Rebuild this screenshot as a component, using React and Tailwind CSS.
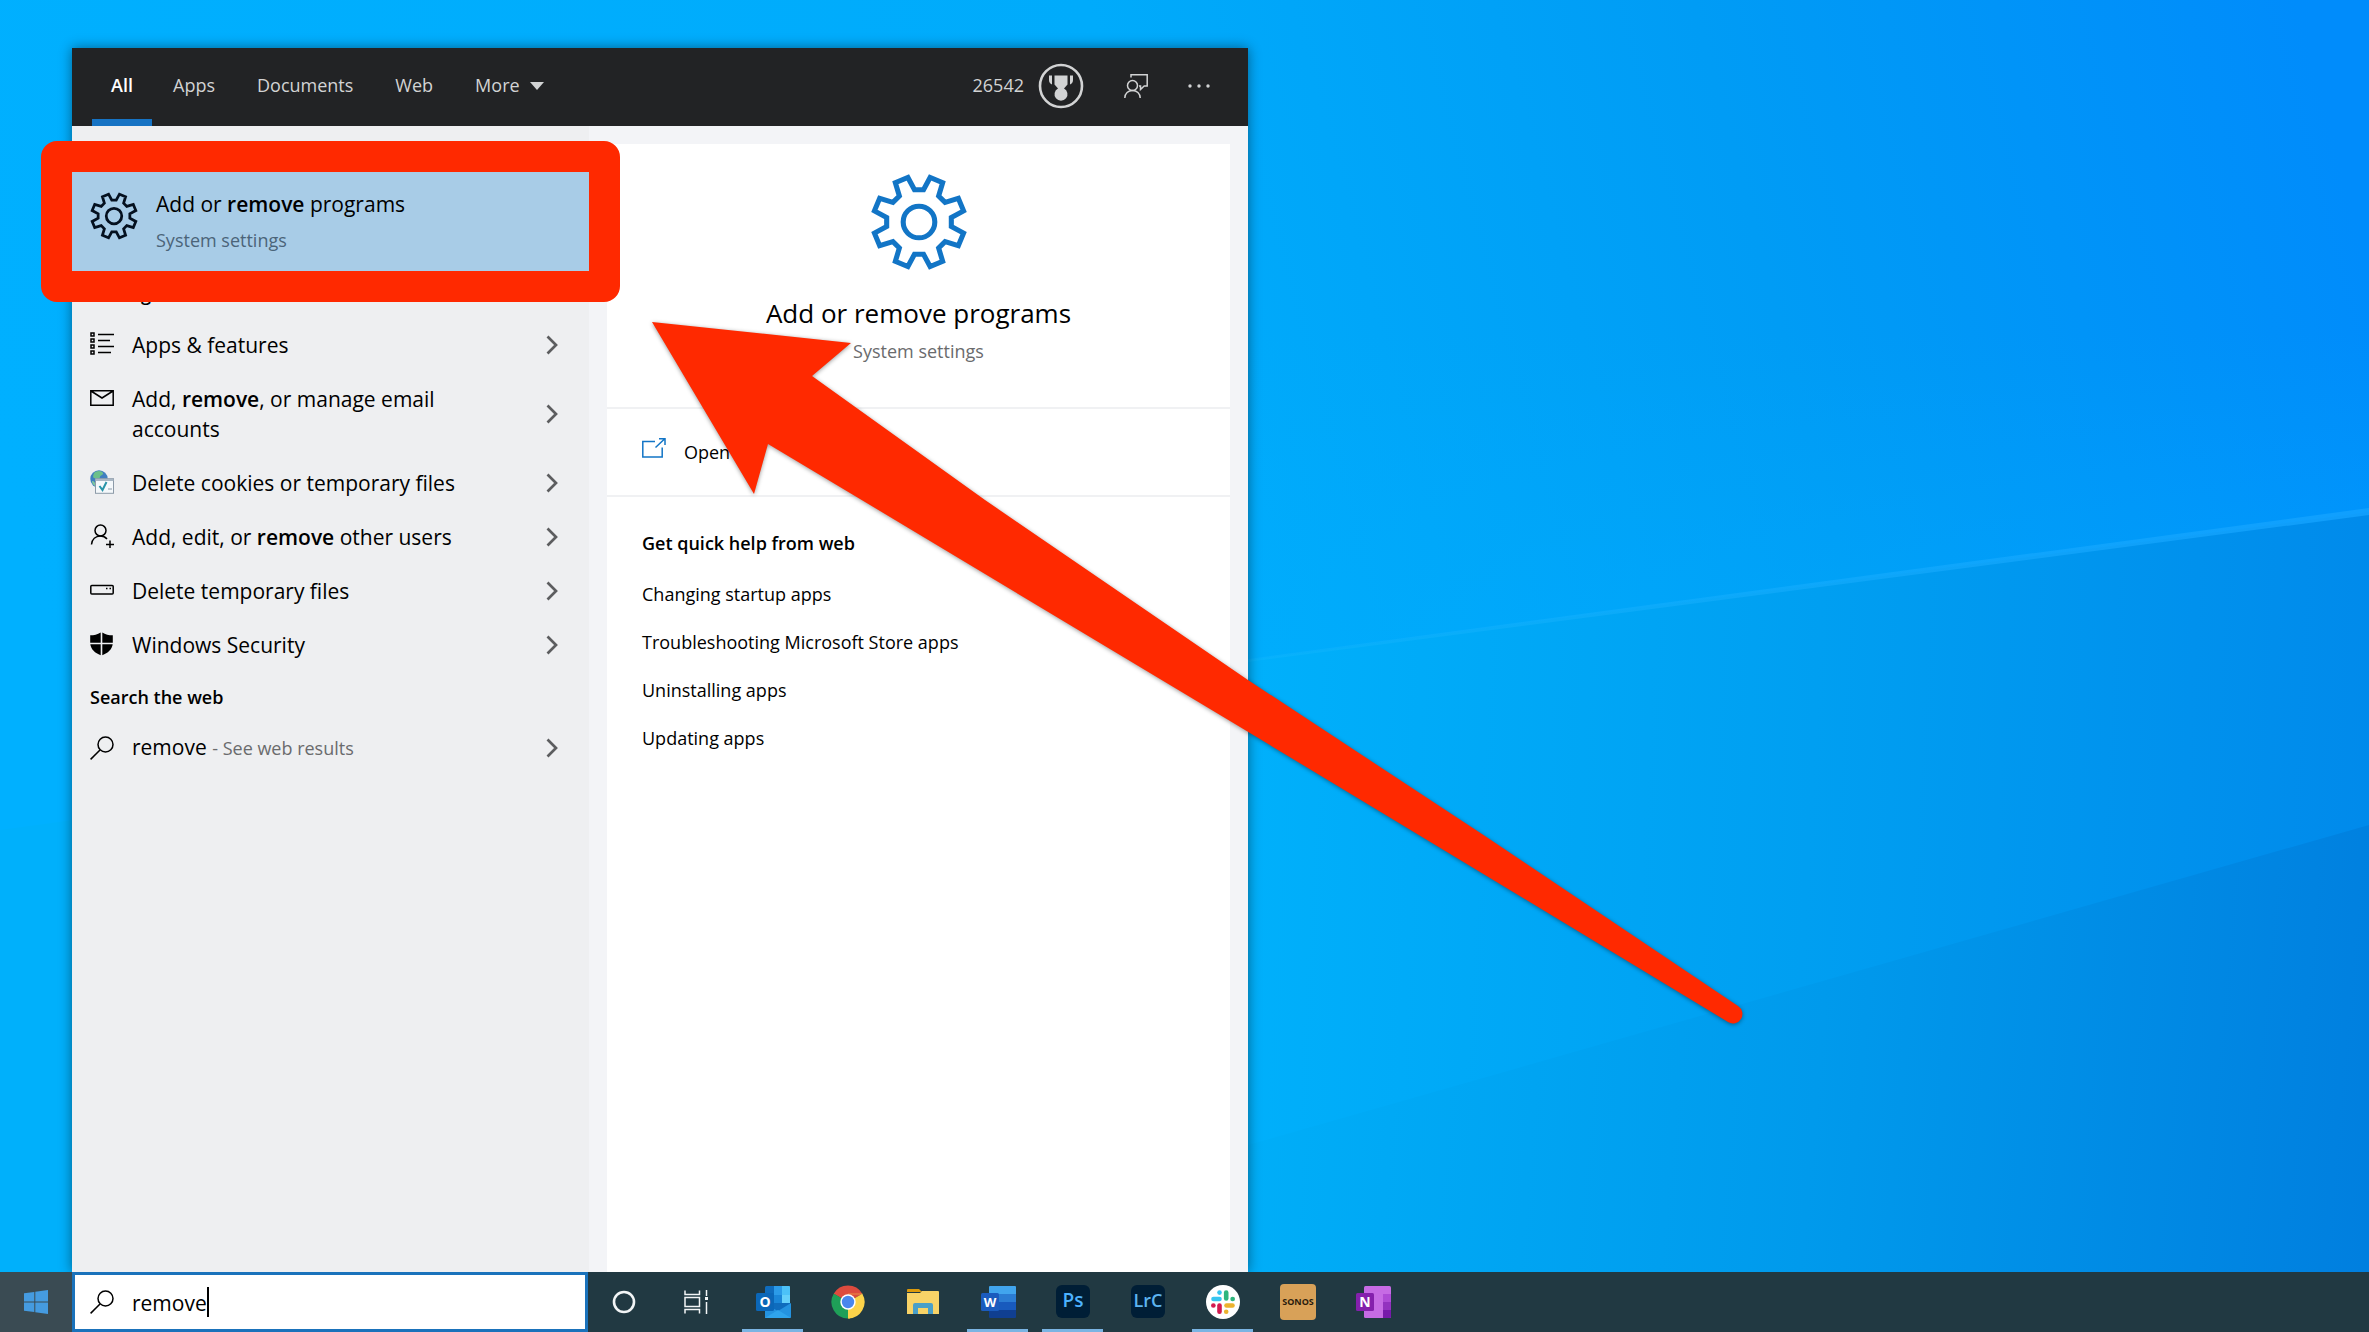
'use client';

// outline of an eight-toothed gear around (50, 50)
const gearPoints = (() => {
  const pts = [];
  for (let i = 0; i < 8; i++) {
    const base = i * 45;
    [[-14, 45], [-8, 32], [8, 32], [14, 45]].forEach(([a, r]) => {
      const rad = ((base + a) * Math.PI) / 180;
      pts.push(`${50 + r * Math.sin(rad)},${50 - r * Math.cos(rad)}`);
    });
  }
  return pts.join(' ');
})();

function Gear({ className, stroke = 5 }) {
  return (
    <svg viewBox="0 0 100 100" className={className} fill="none" stroke="currentColor" strokeWidth={stroke}>
      <polygon points={gearPoints} />
      <circle cx="50" cy="50" r="15.5" />
    </svg>
  );
}

function Wallpaper() {
  return (
    <svg className="absolute inset-0 h-full w-full" viewBox="0 0 2369 1332" preserveAspectRatio="none" aria-hidden="true">
      <defs>
        <linearGradient id="sky" x1="0" y1="0.35" x2="1" y2="0.2">
          <stop offset="0" stopColor="#00b0ff" />
          <stop offset="0.5" stopColor="#00abfb" />
          <stop offset="0.75" stopColor="#009cf5" />
          <stop offset="1" stopColor="#008cfb" />
        </linearGradient>
        <linearGradient id="glow" x1="0" y1="0" x2="0" y2="1">
          <stop offset="0.4" stopColor="#00b0ff" stopOpacity="0" />
          <stop offset="1" stopColor="#00b0ff" stopOpacity="0.5" />
        </linearGradient>
        <linearGradient id="mid" gradientUnits="userSpaceOnUse" x1="1248" y1="800" x2="2369" y2="860">
          <stop offset="0" stopColor="#00b0fb" />
          <stop offset="0.5" stopColor="#009ff1" />
          <stop offset="1" stopColor="#008aeb" />
        </linearGradient>
        <linearGradient id="low" gradientUnits="userSpaceOnUse" x1="1248" y1="1130" x2="2369" y2="1230">
          <stop offset="0" stopColor="#00aef8" />
          <stop offset="0.5" stopColor="#009aec" />
          <stop offset="1" stopColor="#007fdf" />
        </linearGradient>
        <linearGradient id="beam" x1="0" y1="0" x2="1" y2="0">
          <stop offset="0" stopColor="#22bbff" stopOpacity="0.2" />
          <stop offset="1" stopColor="#14a2ff" stopOpacity="0.8" />
        </linearGradient>
      </defs>
      <rect width="2369" height="1332" fill="url(#sky)" />
      <polygon points="0,0 2369,0 2369,512 1248,660 0,830" fill="url(#glow)" />
      <polygon points="0,830 1248,660 2369,512 2369,1332 0,1332" fill="url(#mid)" />
      <polygon points="0,1490 1248,1145 2369,825 2369,1332 0,1332" fill="url(#low)" />
      <polygon points="1248,659 2369,508 2369,515 1248,662" fill="url(#beam)" />
    </svg>
  );
}

const line = { fill: 'none', stroke: 'currentColor', strokeWidth: 1.5 };

function SearchIcon() {
  return (
    <svg viewBox="0 0 24 24" className="size-6 shrink-0" {...line}>
      <circle cx="15.5" cy="8.5" r="7.5" />
      <path d="M10 14 0.6 23.4" />
    </svg>
  );
}

const icons = {
  list: (
    <svg viewBox="0 0 24 24" className="size-6" {...line}>
      <path d="M1 1h3v3H1zM1 7h3v3H1zM1 13h3v3H1zM1 19h3v3H1zM8 2.5h16M8 8.5h12M8 14.500h16M8 20.500h13" />
    </svg>
  ),
  mail: (
    <svg viewBox="0 0 24 24" className="size-6" {...line}>
      <path d="M.8 4.800h22.400v14.400H.8zM1 5l11 7L23 5" />
    </svg>
  ),
  cookies: (
    <svg viewBox="0 0 24 24" className="size-6">
      <circle cx="9" cy="9" r="8.700" fill="#3f7fc0" />
      <path d="M5 2c4-2 7-1 8 1s-3 2-3 4-4 2-6 1 0-5 1-6z" fill="#6cc08a" />
      <path d="M2 11c2 0 4 2 3 5-2-1-3-3-3-5z" fill="#7fc7a0" />
      <rect x="5.500" y="8.700" width="18" height="14.600" fill="#f4f8fb" stroke="#8c9aa8" />
      <path d="M5.500 10h18" stroke="#a9b7c4" strokeWidth="2" />
      <path d="M9.500 16l3 4 4-8" fill="none" stroke="#2793a8" strokeWidth="2" />
      <path d="M18 19h4" stroke="#8c9aa8" />
    </svg>
  ),
  user: (
    <svg viewBox="0 0 24 24" className="size-6" {...line}>
      <circle cx="10.500" cy="6.500" r="5.500" />
      <path d="M1.500 20.500c.5-5 4-8.500 9-8.500 3 0 5 1.200 6.500 3M20 16.500v8M16 20.500h8" />
    </svg>
  ),
  drive: (
    <svg viewBox="0 0 24 24" className="size-6" {...line}>
      <rect x=".8" y="7.500" width="22.400" height="8.500" rx="1" />
      <path d="M16 10.500h1.500M19.500 10.500H21" />
    </svg>
  ),
  shield: (
    <svg viewBox="0 0 24 24" className="size-6" fill="currentColor">
      <path d="M10.700.5v10.200H.2V3.300C4 3.300 7.500 2.500 10.700.5zM12.300.5c3 2 6.500 2.800 10.500 2.800v7.400H12.300zM.3 12.300h10.400v11C5 21 1 17.500.3 12.300zM12.300 12.300h10.400C22 17.500 18 21 12.300 23.300z" />
    </svg>
  ),
};

function Chevron() {
  return (
    <svg viewBox="0 0 12 20" className="h-5 w-3 shrink-0 text-[#5c5d5f]" fill="none" stroke="currentColor" strokeWidth="2.700">
      <path d="M1.500 1.500 10 10l-8.500 8.500" />
    </svg>
  );
}

const results = [
  { icon: 'list', text: 'Apps & features' },
  { icon: 'mail', text: <>Add, <b className="font-semibold">remove</b>, or manage email accounts</> },
  { icon: 'cookies', text: 'Delete cookies or temporary files' },
  { icon: 'user', text: <>Add, edit, or <b className="font-semibold">remove</b> other users</> },
  { icon: 'drive', text: 'Delete temporary files' },
  { icon: 'shield', text: 'Windows Security' },
];

const tabs = ['Apps', 'Documents', 'Web'];

const helpLinks = ['Changing startup apps', 'Troubleshooting Microsoft Store apps', 'Uninstalling apps', 'Updating apps'];

function Header() {
  return (
    <header className="flex h-[78px] items-stretch justify-between bg-[#222325] pr-[38px] pl-5 text-[18px] text-[#d2d3d4]">
      <nav className="flex items-stretch">
        <button className="w-[60px] border-b-[7px] border-[#1673c4] pt-1 font-semibold text-white">All</button>
        {tabs.map((tab) => (
          <button key={tab} className="px-[21px] pb-[3px]">{tab}</button>
        ))}
        <button className="flex items-center gap-2.5 px-[21px] pb-[3px]">
          More
          <svg viewBox="0 0 14 8" className="h-2 w-3.5" fill="currentColor"><path d="M0 0h14L7 8z" /></svg>
        </button>
      </nav>
      <div className="flex items-center pb-[3px]">
        <span>26542</span>
        <button className="ml-3.5" aria-label="Rewards">
          <svg viewBox="0 0 46 46" className="size-[46px]" fill="currentColor">
            <circle cx="23" cy="23" r="21" fill="none" stroke="currentColor" strokeWidth="2.600" />
            <path d="M16.500 12.500h13v9l-3.500 4a6.500 6.500 0 1 1-6 0l-3.500-4zM11 12.500h3v9c-2-1-3-2.500-3-4.500zM32 12.500h3V17c0 2-1 3.500-3 4.500z" />
          </svg>
        </button>
        <button className="ml-10" aria-label="Feedback">
          <svg viewBox="0 0 24 24" className="size-6" {...line}>
            <circle cx="8.500" cy="11.500" r="5" />
            <path d="M.8 24c0-4.500 3.500-7.500 7.700-7.500s7.700 3 7.700 7.500M7 3.500V.8h16.200V12h-3l-3.700 3.500V12H15" />
          </svg>
        </button>
        <button className="ml-10" aria-label="More options">
          <svg viewBox="0 0 22 4" className="h-1 w-[22px]" fill="currentColor">
            <circle cx="2" cy="2" r="1.700" /><circle cx="11" cy="2" r="1.700" /><circle cx="20" cy="2" r="1.700" />
          </svg>
        </button>
      </div>
    </header>
  );
}

function ResultsColumn() {
  return (
    <section className="w-[517px] shrink-0 bg-[#eeeff1] pt-[46px]">
      <div className="relative z-10">
        <button className="flex h-[99px] w-full items-start gap-[17px] bg-[#a8cce7] pt-[17px] pl-[17px] text-left">
          <Gear className="mt-0.5 size-[50px] text-[#04101f]" stroke={5.5} />
          <span className="flex flex-col gap-1.5">
            <span className="text-[21px] leading-[30px] text-black">Add or <b className="font-semibold">remove</b> programs</span>
            <span className="text-[18px] leading-[30px] text-[#4b6479]">System settings</span>
          </span>
        </button>
        <span className="pointer-events-none absolute -inset-[31px] rounded-2xl border-[31px] border-[#ff2900]" />
      </div>
      <h2 className="flex h-[47px] items-center pl-[18px] text-[18px] font-semibold">Settings</h2>
      <ul>
        {results.map((r) => (
          <li key={r.icon}>
            <button className="flex w-full items-center justify-between py-3 pr-[31px] pl-[18px] text-left">
              <span className="flex items-start gap-[18px]">
                <span className="pt-0.5">{icons[r.icon]}</span>
                <span className="max-w-[330px] text-[21px] leading-[30px]">{r.text}</span>
              </span>
              <Chevron />
            </button>
          </li>
        ))}
      </ul>
      <h2 className="flex h-12 items-center pt-0.5 pl-[18px] text-[18px] font-semibold">Search the web</h2>
      <button className="flex w-full items-center justify-between py-3 pr-[31px] pl-[18px] text-left">
        <span className="flex items-center gap-[18px]">
          <SearchIcon />
          <span className="text-[21px] leading-[30px]">
            remove <span className="text-[18px] text-[#6a6b6d]">- See web results</span>
          </span>
        </span>
        <Chevron />
      </button>
    </section>
  );
}

function DetailsColumn() {
  return (
    <section className="flex flex-1 bg-[#f3f4f7] px-[18px] pt-[18px]">
      <div className="flex-1 bg-white text-[18px]">
        <div className="flex flex-col items-center border-b-2 border-[#f0f1f3] pt-[27px] pb-[42px]">
          <Gear className="size-[102px] text-[#1275c6]" />
          <h1 className="mt-[22px] text-[26px] leading-9">Add or remove programs</h1>
          <p className="mt-1.5 leading-7 text-[#6a6b6d]">System settings</p>
        </div>
        <div className="border-b-2 border-[#f0f1f3] pl-[35px]">
          <button className="flex h-[86px] items-center gap-[18px]">
            <svg viewBox="0 0 24 20" className="mb-2 h-5 w-6 text-[#1275c6]" {...line}>
              <path d="M13 3.500H.8V19h19.400V9.500M13.500 9.500 22.500 1M17 .8h6V7" />
            </svg>
            Open
          </button>
        </div>
        <div className="pt-8 pl-[35px]">
          <h2 className="leading-7 font-semibold">Get quick help from web</h2>
          <ul className="mt-[13px]">
            {helpLinks.map((label) => (
              <li key={label}><a href="#" className="block py-2.5 leading-7">{label}</a></li>
            ))}
          </ul>
        </div>
      </div>
    </section>
  );
}

const apps = [
  {
    name: 'Outlook', open: true,
    art: (
      <>
        <rect x="10" y="2" width="25" height="32" rx="1.500" fill="#0f6cbd" />
        <path d="M19 2h8v9h-8z" fill="#2b9be8" /><path d="M27 2h7a1 1 0 0 1 1 1v8h-8z" fill="#4cc2f8" />
        <path d="M19 11h8v8h-8z" fill="#1a86d8" /><path d="M27 11h8v8h-8z" fill="#65d0fa" />
        <path d="M10 34V20l13 7 13-8v14a1 1 0 0 1-1 1z" fill="#2493e0" /><path d="M10 34l13-8 13 8z" fill="#2fa4ec" />
        <rect x="1" y="9" width="18" height="18" rx="1.500" fill="#0b67b8" />
        <text x="10" y="23" textAnchor="middle" fontSize="14" fontWeight="700" fill="#fff">O</text>
      </>
    ),
  },
  {
    name: 'Chrome',
    art: (
      <>
        <path d="M18 18 3.700 9.700a16.500 16.500 0 0 1 28.600 0z" fill="#dd4b3e" />
        <path d="M18 18 32.300 9.700A16.500 16.500 0 0 1 18 34.500z" fill="#fcd34a" />
        <path d="M18 18v16.500A16.500 16.500 0 0 1 3.700 9.700z" fill="#1f9f58" />
        <path d="M18 10.300h14.600l-.3-.6H18zM25 22l-7 12.500h2L27 20z" fill="#fcd34a" />
        <path d="M11 22 3.700 9.700 18 18z" fill="#1f9f58" />
        <circle cx="18" cy="18" r="7.700" fill="#fff" /><circle cx="18" cy="18" r="6.200" fill="#4a87ee" />
      </>
    ),
  },
  {
    name: 'File Explorer',
    art: (
      <>
        <path d="M2 6a1 1 0 0 1 1-1h11l3 3H2z" fill="#dc9a0c" />
        <path d="M2 9h13l2-2h16a1 1 0 0 1 1 1v22H2z" fill="#f8d367" />
        <path d="M8 30V21a2 2 0 0 1 2-2h16a2 2 0 0 1 2 2v9h-5v-6H13v6z" fill="#4a9fc8" />
      </>
    ),
  },
  {
    name: 'Word', open: true,
    art: (
      <>
        <path d="M9 3a1 1 0 0 1 1-1h25a1 1 0 0 1 1 1v7H9z" fill="#41a5ee" /><path d="M9 10h27v8H9z" fill="#2b7cd3" />
        <path d="M9 18h27v8H9z" fill="#185abd" /><path d="M9 26h27v7a1 1 0 0 1-1 1H10a1 1 0 0 1-1-1z" fill="#103f91" />
        <rect x="1" y="9" width="18" height="18" rx="1.500" fill="#1b5cbe" />
        <text x="10" y="23" textAnchor="middle" fontSize="13" fontWeight="700" fill="#fff">W</text>
      </>
    ),
  },
  {
    name: 'Photoshop', open: true,
    art: (
      <>
        <rect x="1" y="1" width="34" height="33" rx="6" fill="#001e36" />
        <text x="18" y="23" textAnchor="middle" fontSize="19" fontWeight="600" fill="#4db2ff">Ps</text>
      </>
    ),
  },
  {
    name: 'Lightroom Classic',
    art: (
      <>
        <rect x="1" y="1" width="34" height="33" rx="6" fill="#001e36" />
        <text x="18" y="23" textAnchor="middle" fontSize="18" fontWeight="600" fill="#5db4f0">LrC</text>
      </>
    ),
  },
  {
    name: 'Slack', open: true,
    art: (
      <>
        <circle cx="18" cy="18" r="17" fill="#fff" />
        <g fill="none" strokeWidth="4.600" strokeLinecap="round">
          <path d="M8.500 15h6" stroke="#36c5f0" /><path d="M14.500 8.500v.1" stroke="#36c5f0" />
          <path d="M21.200 8.500v6" stroke="#2eb67d" /><path d="M27.700 15h-.1" stroke="#2eb67d" />
          <path d="M21.500 21.500h6" stroke="#ecb22e" /><path d="M21.200 27.800v-.1" stroke="#ecb22e" />
          <path d="M14.500 21.500v6.300" stroke="#d3194f" /><path d="M8.300 21.500h.1" stroke="#d3194f" />
        </g>
      </>
    ),
  },
  {
    name: 'Sonos',
    art: (
      <>
        <rect width="36" height="36" rx="4" fill="#d8a158" />
        <text x="18" y="21" textAnchor="middle" fontSize="9" fontWeight="700" fill="#2b1c0d">SONOS</text>
      </>
    ),
  },
  {
    name: 'OneNote',
    art: (
      <>
        <rect x="9" y="2" width="27" height="32" rx="1.500" fill="#c66be4" />
        <path d="M28 10h8v8h-8z" fill="#ae4bd5" /><path d="M28 18h8v8h-8z" fill="#9332bf" /><path d="M28 26h8v7a1 1 0 0 1-1 1h-7z" fill="#7719aa" />
        <rect x="1" y="9" width="18" height="18" rx="1.500" fill="#8420ac" />
        <text x="10" y="23" textAnchor="middle" fontSize="14" fontWeight="700" fill="#fff">N</text>
      </>
    ),
  },
];

function Taskbar() {
  return (
    <footer className="relative flex h-[60px] items-stretch bg-[#213942]">
      <button className="flex w-[72px] items-center justify-center bg-[#3a4b53]" aria-label="Start">
        <svg viewBox="0 0 24 24" className="size-6" fill="#459be0">
          <path d="M0 3.300 10.300 1.900v9.500H0zM11.300 1.800 24 0v11.400H11.300zM0 12.400h10.300v9.700L0 20.700zM11.300 12.400H24V24l-12.700-1.800z" />
        </svg>
      </button>
      <label className="flex w-[516px] items-center border-3 border-[#1a72bb] bg-white pl-[15px]">
        <SearchIcon />
        <input
          type="text"
          aria-label="Search"
          defaultValue="remove"
          className="ml-[18px] pt-0.5 field-sizing-content text-[21px] leading-[30px] caret-transparent outline-none"
        />
        <span className="h-[30px] w-0.5 bg-black" />
      </label>
      <button className="flex w-[72px] items-center justify-center" aria-label="Cortana">
        <svg viewBox="0 0 24 24" className="size-6"><circle cx="12" cy="12" r="10" fill="none" stroke="#f2f5f6" strokeWidth="2.600" /></svg>
      </button>
      <button className="flex w-[72px] items-center justify-center text-[#f2f5f6]" aria-label="Task View">
        <svg viewBox="0 0 24 24" className="size-6" {...line}>
          <path d="M1 .5v4h14.500v-4M1 23.500v-4h14.500v4M1 7.500h14.500v9H1zM22.500 0v6M22.500 12v12" />
          <path d="M21 8.500h3" strokeWidth="3" />
        </svg>
      </button>
      <div className="ml-2.5 flex gap-3.5">
        {apps.map((app) => (
          <button
            key={app.name}
            aria-label={app.name}
            className={
              app.open
                ? 'flex w-[61px] justify-center border-b-3 border-[#7ab4e3] pt-3'
                : 'flex w-[61px] justify-center pt-3'
            }
          >
            <svg viewBox="0 0 36 36" className="size-9">{app.art}</svg>
          </button>
        ))}
      </div>
    </footer>
  );
}

// big red pointer laid over the desktop, from the lower right up to the first result
function Arrow() {
  return (
    <svg
      viewBox="0 0 1100 712"
      className="pointer-events-none absolute top-[316px] left-[648px] z-20 h-[712px] w-[1100px] drop-shadow-[0_1px_2px_rgba(0,0,0,0.4)]"
      fill="#ff2900"
    >
      <path d="M4 6 203 27 164 60 337 184 600 364 837 520 1090 690A9 9 0 0 1 1080 706L837 559 592 411 217 186 120 128 106 178z" />
    </svg>
  );
}

export default function App() {
  return (
    <div className="relative flex min-h-screen flex-col overflow-hidden font-['Open_Sans','Noto_Sans',sans-serif] text-black">
      <Wallpaper />
      <main className="relative flex flex-1 pt-12 pl-[72px]">
        <div className="flex w-full max-w-[1176px] flex-col shadow-[0_0_12px_rgba(0,0,0,0.45)]">
          <Header />
          <div className="flex flex-1">
            <ResultsColumn />
            <DetailsColumn />
          </div>
        </div>
      </main>
      <Taskbar />
      <Arrow />
    </div>
  );
}
